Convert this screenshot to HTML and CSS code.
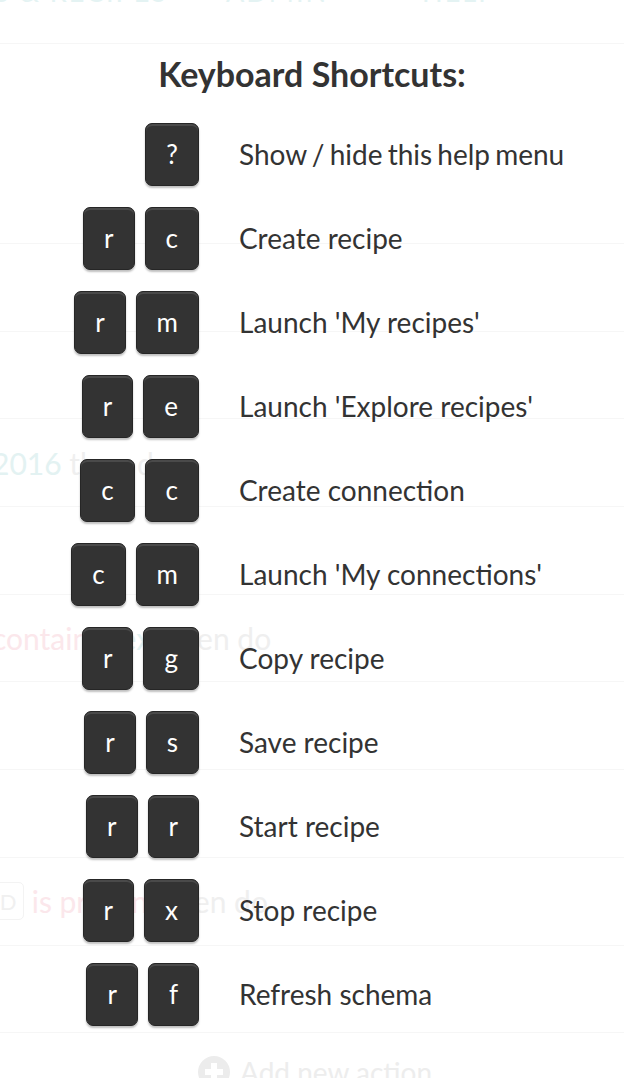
FILE: index.html
```html
<!DOCTYPE html>
<html lang="en">
<head>
<meta charset="utf-8">
<title>Keyboard Shortcuts</title>
<link rel="stylesheet" href="styles.css">
</head>
<body>
<div class="page">
  <nav class="nav">
    <span class="nav-item nav-first">TOOLS &amp; RECIPES</span>
    <span class="nav-item nav-admin">ADMIN</span>
    <span class="nav-item nav-help">HELP</span>
  </nav>
  <div class="head-band"></div>
  <div class="bg-row"></div>
  <div class="bg-row"></div>
  <div class="bg-row"><span class="teal">2016</span>&nbsp;<span class="grey">then do</span></div>
  <div class="bg-row"></div>
  <div class="bg-row"><span class="pink">contains</span>&nbsp;<span class="teal">text</span>&nbsp;<span class="grey">then do</span></div>
  <div class="bg-row"></div>
  <div class="bg-row"></div>
  <div class="bg-row"><span class="pill">D</span>&nbsp;<span class="pink">is present</span>&nbsp;<span class="grey">then do</span></div>
  <div class="bg-row"></div>
  <div class="bg-add">
    <svg class="plus" width="32" height="32" viewBox="0 0 32 32"><circle cx="16" cy="16" r="16" fill="#ececec"/><rect x="13" y="7" width="6" height="18" fill="#fff"/><rect x="7" y="13" width="18" height="6" fill="#fff"/></svg>
    <span>Add new action</span>
  </div>
</div>

<div class="overlay">
  <div class="modal">
    <h2 class="title">Keyboard Shortcuts:</h2>
    <div class="shortcuts">
      <div class="keys"><kbd class="key">?</kbd></div>
      <div class="desc desc-tight">Show / hide this help menu</div>

      <div class="keys"><kbd class="key">r</kbd><kbd class="key">c</kbd></div>
      <div class="desc">Create recipe</div>

      <div class="keys"><kbd class="key">r</kbd><kbd class="key">m</kbd></div>
      <div class="desc">Launch 'My recipes'</div>

      <div class="keys"><kbd class="key">r</kbd><kbd class="key">e</kbd></div>
      <div class="desc">Launch 'Explore recipes'</div>

      <div class="keys"><kbd class="key">c</kbd><kbd class="key">c</kbd></div>
      <div class="desc">Create connection</div>

      <div class="keys"><kbd class="key">c</kbd><kbd class="key">m</kbd></div>
      <div class="desc">Launch 'My connections'</div>

      <div class="keys"><kbd class="key">r</kbd><kbd class="key">g</kbd></div>
      <div class="desc">Copy recipe</div>

      <div class="keys"><kbd class="key">r</kbd><kbd class="key">s</kbd></div>
      <div class="desc">Save recipe</div>

      <div class="keys"><kbd class="key">r</kbd><kbd class="key">r</kbd></div>
      <div class="desc">Start recipe</div>

      <div class="keys"><kbd class="key">r</kbd><kbd class="key">x</kbd></div>
      <div class="desc">Stop recipe</div>

      <div class="keys"><kbd class="key">r</kbd><kbd class="key">f</kbd></div>
      <div class="desc">Refresh schema</div>
    </div>
  </div>
</div>
</body>
</html>
```

FILE: styles.css
```css
html, body {
  margin: 0;
  padding: 0;
}
body {
  position: relative;
  width: 624px;
  height: 1078px;
  overflow: hidden;
  background: #fff;
  font-family: Lato, "Open Sans", sans-serif;
}

/* faded page behind the overlay */
.page {
  width: 624px;
}
.nav {
  height: 44px;
  border-bottom: 1px solid #f6f6f6;
  box-sizing: border-box;
  display: flex;
  align-items: flex-end;
  overflow: hidden;
}
.nav-item {
  font-size: 27px;
  line-height: 1;
  letter-spacing: 2px;
  color: #e4f3f3;
  margin-bottom: 38px;
  white-space: nowrap;
}
.nav-first {
  margin-left: -86px;
}
.nav-admin {
  margin-left: 58px;
}
.nav-help {
  margin-left: 94px;
}
.head-band {
  height: 200px;
  box-sizing: border-box;
  border-bottom: 1px solid #f6f6f6;
}
.bg-row {
  height: 87.7px;
  box-sizing: border-box;
  border-bottom: 1px solid #f6f6f6;
  display: flex;
  align-items: center;
  margin-left: -8px;
  font-size: 30px;
  white-space: nowrap;
}
.teal { color: #e3f2f2; }
.grey { color: #efefef; }
.pink { color: #fbe7eb; }
.pill {
  display: inline-flex;
  align-items: center;
  justify-content: center;
  width: 30px;
  height: 36px;
  border: 1px solid #f3f3f3;
  border-radius: 5px;
  color: #f0f0f0;
  font-size: 22px;
}
.bg-add {
  display: flex;
  align-items: center;
  gap: 10px;
  padding-left: 198px;
  padding-top: 22px;
  font-size: 28px;
  color: #ededed;
}

/* overlay with the shortcuts modal */
.overlay {
  position: absolute;
  inset: 0;
}
.modal {
  display: flex;
  flex-direction: column;
  align-items: center;
}
.title {
  margin: 54px 0 0 0;
  height: 58px;
  font-size: 34px;
  line-height: 40px;
  font-weight: 700;
  color: #333;
}
.shortcuts {
  display: grid;
  grid-template-columns: 199px 1fr;
  grid-auto-rows: 84px;
  column-gap: 40px;
  width: 624px;
}
.keys {
  display: flex;
  justify-content: flex-end;
  align-items: center;
  gap: 10px;
}
.key {
  display: inline-flex;
  align-items: center;
  justify-content: center;
  height: 63px;
  min-width: 49px;
  padding: 0 20px;
  box-sizing: border-box;
  background: #333;
  border: 1px solid #262626;
  border-radius: 7px;
  box-shadow: inset 0 2px 0 #4a4a4a, 0 2px 2px rgba(0, 0, 0, 0.25);
  color: #fff;
  font-family: Lato, "Open Sans", sans-serif;
  font-size: 26px;
  line-height: 1;
}
.desc {
  display: flex;
  align-items: center;
  font-size: 28px;
  color: #333;
  white-space: nowrap;
}
.desc-tight {
  word-spacing: -2px;
}
```
